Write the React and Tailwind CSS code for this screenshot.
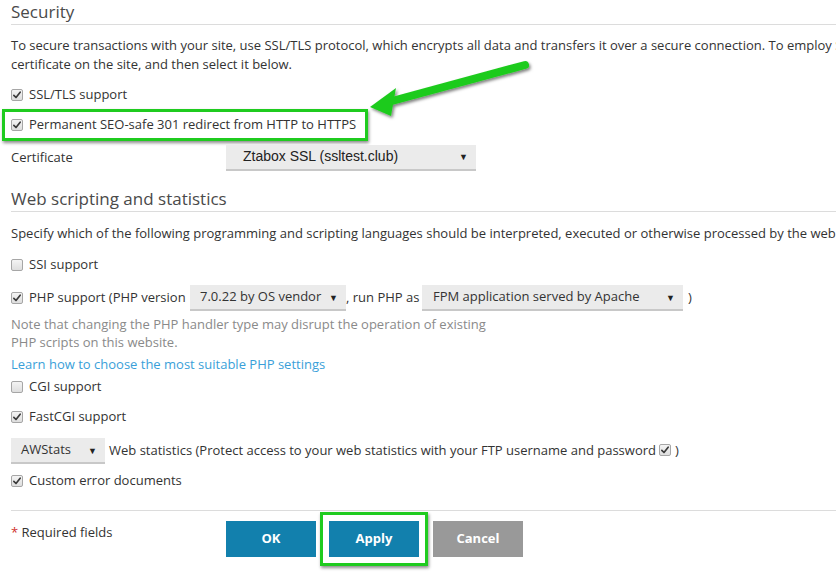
import React from 'react';

function Check({ checked = false }) {
  return (
    <span className="inline-flex h-[12px] w-[12px] shrink-0 items-center justify-center rounded-[2px] border border-[#a6a6a6] bg-gradient-to-b from-[#f4f4f4] to-[#dedede]">
      {checked && (
        <svg viewBox="0 0 12 12" className="h-[10px] w-[10px]">
          <path d="M2.2 6.4 L4.8 9 L9.8 2.6" fill="none" stroke="#3a3a3a" strokeWidth="2" strokeLinecap="round" strokeLinejoin="round" />
        </svg>
      )}
    </span>
  );
}

function CheckRow({ checked, children, className = '' }) {
  return (
    <div className={`flex h-[19px] items-center gap-[6px] ${className}`}>
      <Check checked={checked} />
      <span>{children}</span>
    </div>
  );
}

function Select({ children, className = '', textClass = '' }) {
  return (
    <div className={`flex h-[26px] items-center justify-between border-b-2 border-[#c8c8c8] bg-[#ebebeb] pr-[8px] ${className}`}>
      <span className={textClass}>{children}</span>
      <span className="text-[9px] leading-none text-[#222]">▼</span>
    </div>
  );
}

export default function App() {
  return (
    <div className="relative h-[573px] w-[836px] overflow-hidden bg-white pl-[11px] text-[13px] text-[#333] font-['Open_Sans',sans-serif]">
      {/* Security */}
      <div className="h-[25px] border-b border-[#dcdcdc] text-[17px] leading-[24px] text-[#4a4a4a]">Security</div>
      <p className="mt-[11px] leading-[19px]">
        <span className="whitespace-nowrap">To secure transactions with your site, use SSL/TLS protocol, which encrypts all data and transfers it over a secure connection. To employ SSL/TLS, install an SSL/TLS</span>
        <br />
        certificate on the site, and then select it below.
      </p>
      <CheckRow checked className="mt-[11px]">SSL/TLS support</CheckRow>
      <div className="-ml-[9px] mt-[5px] flex h-[32px] w-[366px] items-center gap-[6px] border-[3px] border-[#1fcb1f] pl-[6px] shadow-[1px_2px_3px_rgba(0,0,0,0.45)]">
        <Check checked />
        <span>Permanent SEO-safe 301 redirect from HTTP to HTTPS</span>
      </div>
      <div className="mt-[4px] flex h-[25px] items-center">
        <span className="w-[215px]">Certificate</span>
        <Select className="h-[25px] w-[250px]" textClass="pl-[17px] font-['Liberation_Sans',sans-serif] text-[14px] text-[#222]">Ztabox SSL (ssltest.club)</Select>
      </div>

      {/* Web scripting */}
      <div className="mt-[18px] h-[24px] border-b border-[#dcdcdc] text-[17px] leading-[22px] text-[#4a4a4a]">Web scripting and statistics</div>
      <p className="mt-[12px] whitespace-nowrap leading-[19px]">Specify which of the following programming and scripting languages should be interpreted, executed or otherwise processed by the web server.</p>
      <CheckRow className="mt-[12px]">SSI support</CheckRow>
      <div className="mt-[11px] flex h-[26px] items-center whitespace-nowrap">
        <Check checked />
        <span className="ml-[6px] w-[161px]">PHP support (PHP version</span>
        <Select className="w-[156px]" textClass="pl-[10px]">7.0.22 by OS vendor</Select>
        <span className="w-[76px]">, run PHP as</span>
        <Select className="w-[261px]" textClass="pl-[11px]">FPM application served by Apache</Select>
        <span className="ml-[5px]">)</span>
      </div>
      <p className="mt-[4px] leading-[18px] text-[#8a8a8a]">
        Note that changing the PHP handler type may disrupt the operation of existing
        <br />
        PHP scripts on this website.
      </p>
      <div className="mt-[4px] leading-[18px] text-[#3a9fd9]">Learn how to choose the most suitable PHP settings</div>
      <CheckRow className="mt-[4px]">CGI support</CheckRow>
      <CheckRow checked className="mt-[11px]">FastCGI support</CheckRow>
      <div className="mt-[12px] flex h-[26px] items-center whitespace-nowrap">
        <Select className="w-[94px]" textClass="pl-[10px]">AWStats</Select>
        <span className="ml-[4px]">Web statistics (Protect access to your web statistics with your FTP username and password</span>
        <span className="ml-[3px]"><Check checked /></span>
        <span className="ml-[4px]">)</span>
      </div>
      <CheckRow checked className="mt-[7px]">Custom error documents</CheckRow>

      {/* Footer */}
      <div className="mt-[20px] border-t border-[#dcdcdc]" />
      <div className="mt-[1px] flex items-center">
        <span className="w-[215px] self-start pt-[11px]"><span className="text-[#d0312d]">*</span> Required fields</span>
        <button className="h-[36px] w-[90px] bg-[#1280ad] text-[13px] font-bold text-white">OK</button>
        <div className="ml-[4px] border-[3px] border-[#1fcb1f] p-[6px] shadow-[1px_2px_3px_rgba(0,0,0,0.45)]">
          <button className="block h-[36px] w-[90px] bg-[#1280ad] text-[13px] font-bold text-white">Apply</button>
        </div>
        <button className="ml-[5px] h-[36px] w-[90px] bg-[#999999] text-[13px] font-bold text-white">Cancel</button>
      </div>

      {/* annotation arrow */}
      <svg className="pointer-events-none absolute left-0 top-0" width="836" height="573">
        <defs>
          <filter id="sh" x="-20%" y="-20%" width="140%" height="140%">
            <feDropShadow dx="1.5" dy="2" stdDeviation="1.5" floodColor="#000" floodOpacity="0.5" />
          </filter>
        </defs>
        <g filter="url(#sh)">
          <line x1="525" y1="65" x2="392" y2="101" stroke="#1fcb1f" strokeWidth="8" strokeLinecap="round" />
          <polygon points="370,107 396,88 391,116" fill="#1fcb1f" />
        </g>
      </svg>
    </div>
  );
}
